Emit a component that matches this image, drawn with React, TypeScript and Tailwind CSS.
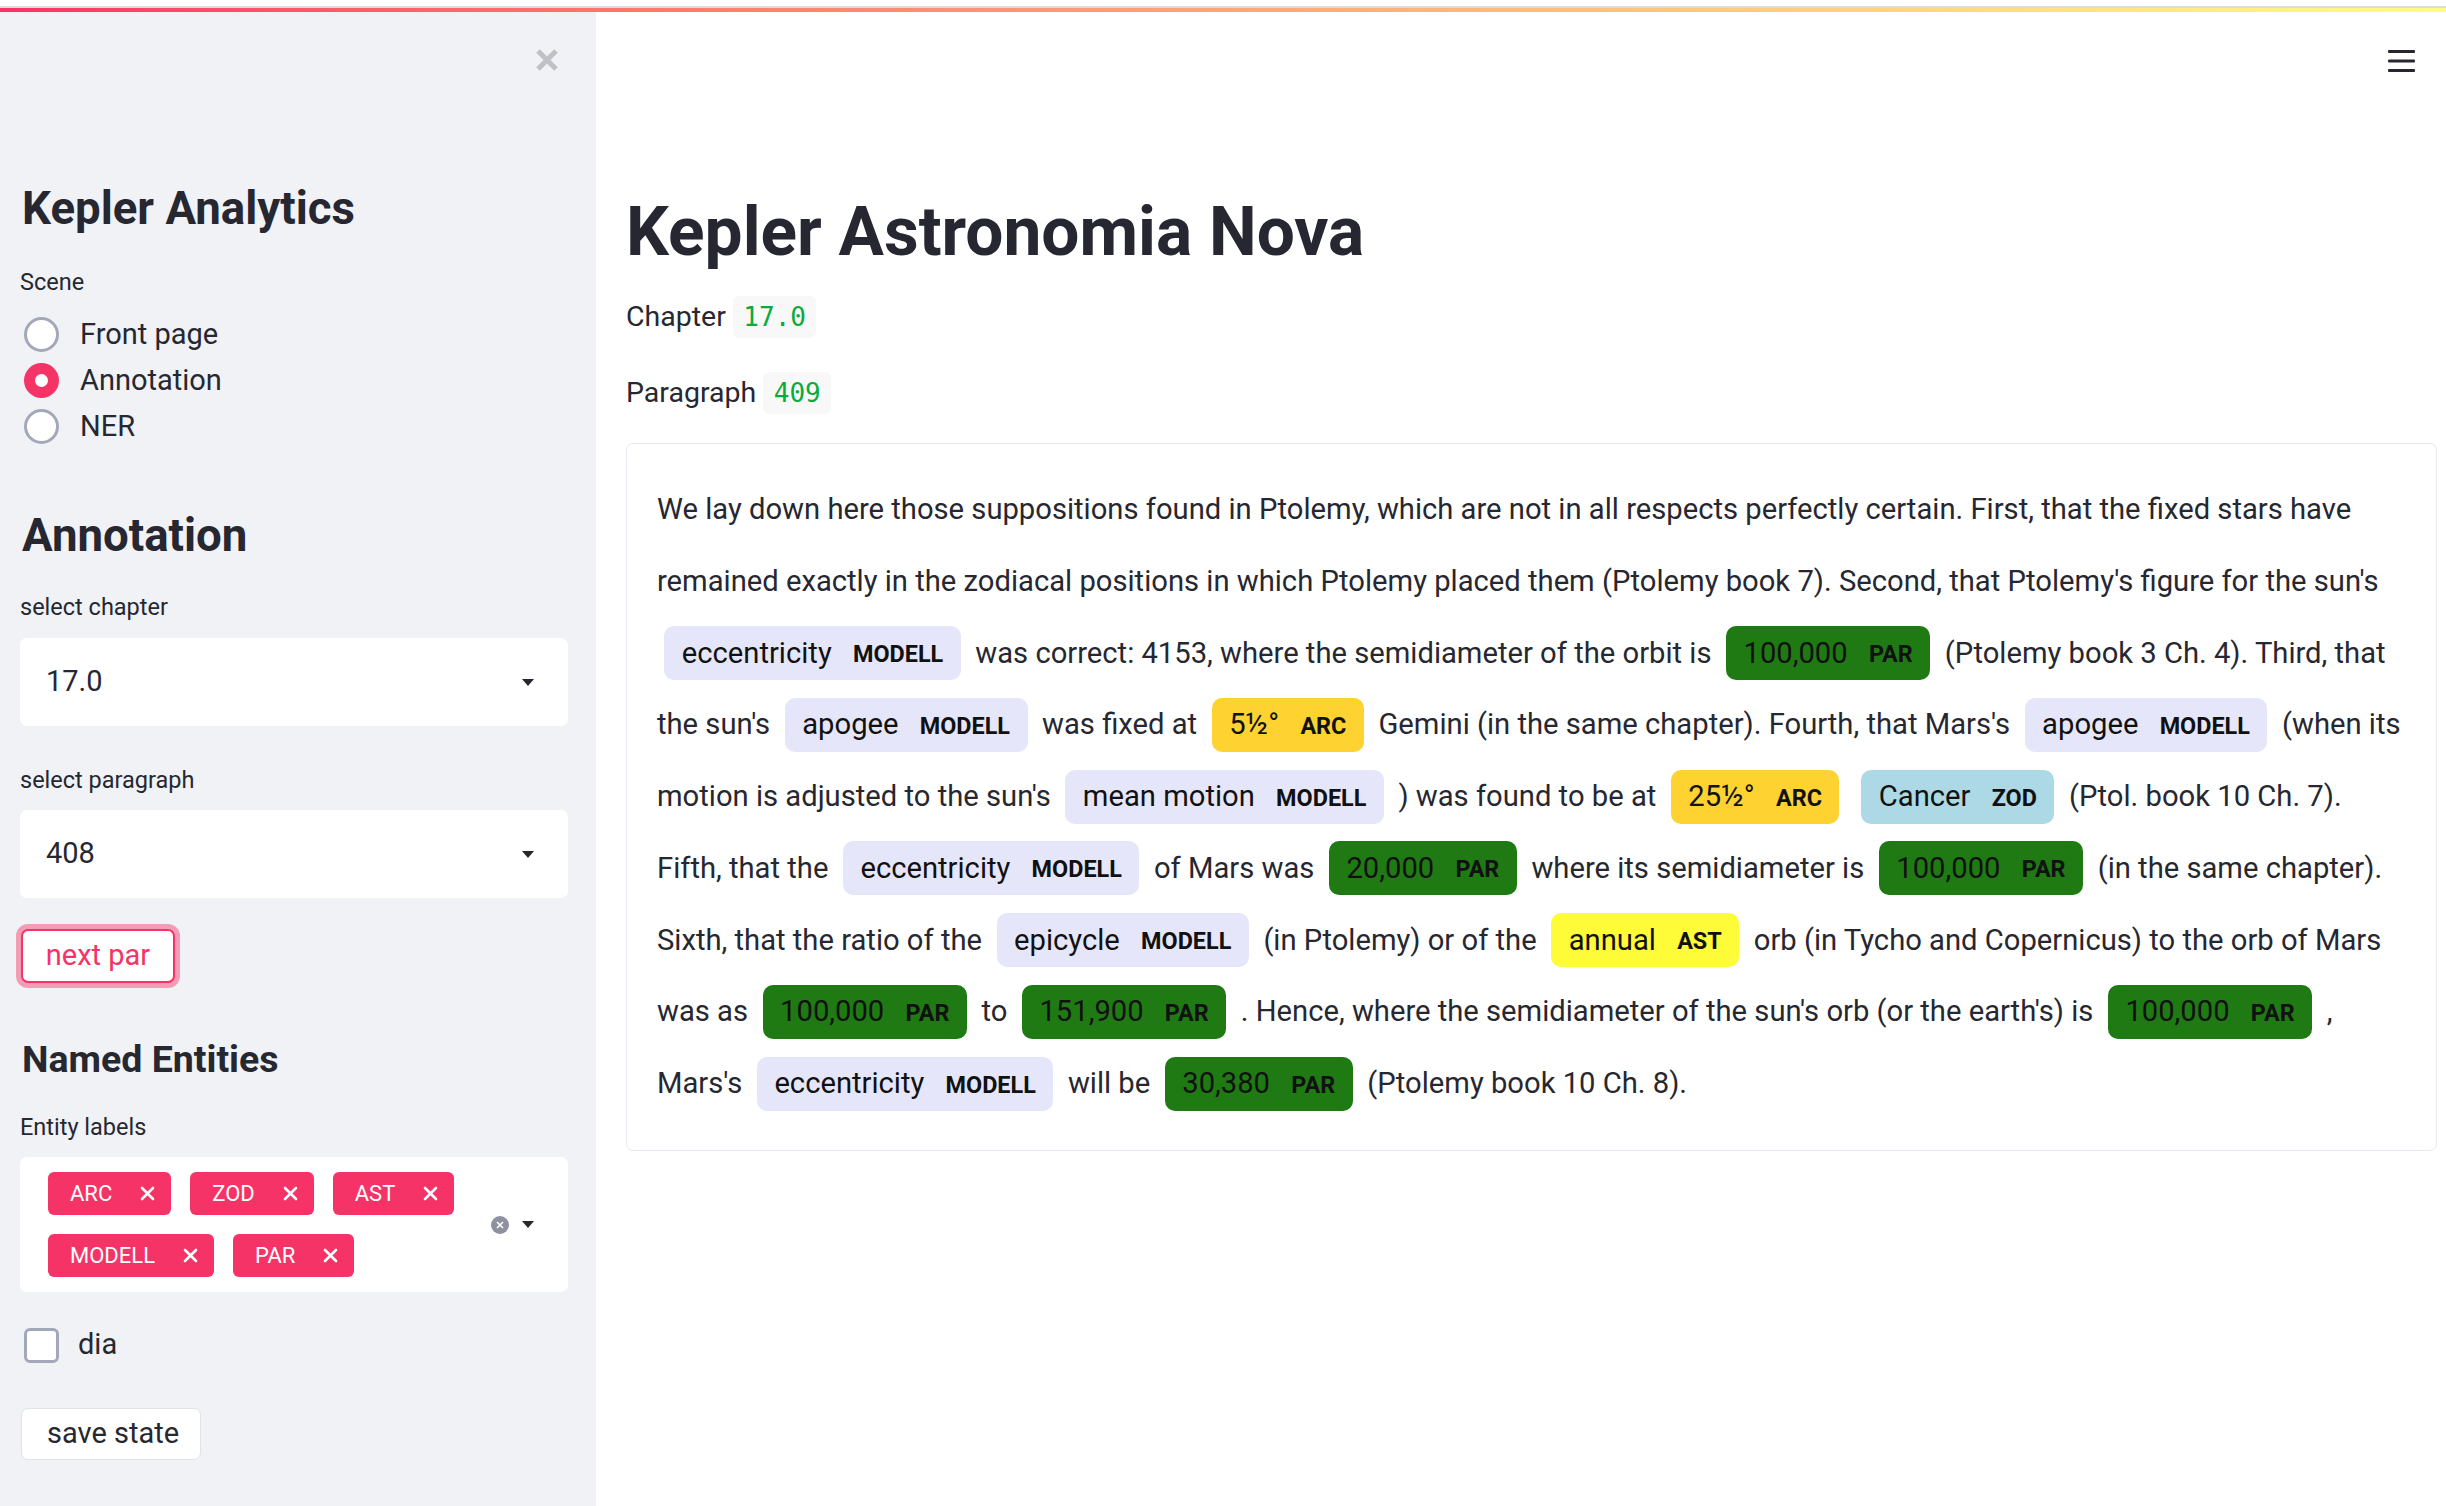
import React from "react";

type Seg = string | [string, string];

const markBg: Record<string, string> = {
  MODELL: "bg-[#e6e6fa]",
  PAR: "bg-[#1f7a14]",
  ARC: "bg-[#fdd231]",
  AST: "bg-[#fefb38]",
  ZOD: "bg-[#add8e6]",
};

const lines: Seg[][] = [
  ["We lay down here those suppositions found in Ptolemy, which are not in all respects perfectly certain. First, that the fixed stars have"],
  ["remained exactly in the zodiacal positions in which Ptolemy placed them (Ptolemy book 7). Second, that Ptolemy's figure for the sun's"],
  [["eccentricity", "MODELL"], "was correct: 4153, where the semidiameter of the orbit is", ["100,000", "PAR"], "(Ptolemy book 3 Ch. 4). Third, that"],
  ["the sun's", ["apogee", "MODELL"], "was fixed at", ["5½°", "ARC"], "Gemini (in the same chapter). Fourth, that Mars's", ["apogee", "MODELL"], "(when its"],
  ["motion is adjusted to the sun's", ["mean motion", "MODELL"], ") was found to be at", ["25½°", "ARC"], ["Cancer", "ZOD"], "(Ptol. book 10 Ch. 7)."],
  ["Fifth, that the", ["eccentricity", "MODELL"], "of Mars was", ["20,000", "PAR"], "where its semidiameter is", ["100,000", "PAR"], "(in the same chapter)."],
  ["Sixth, that the ratio of the", ["epicycle", "MODELL"], "(in Ptolemy) or of the", ["annual", "AST"], "orb (in Tycho and Copernicus) to the orb of Mars"],
  ["was as", ["100,000", "PAR"], "to", ["151,900", "PAR"], ". Hence, where the semidiameter of the sun's orb (or the earth's) is", ["100,000", "PAR"], ","],
  ["Mars's", ["eccentricity", "MODELL"], "will be", ["30,380", "PAR"], "(Ptolemy book 10 Ch. 8)."],
];

function Mark({ text, label }: { text: string; label: string }) {
  return (
    <span className={`inline-block ${markBg[label]} py-[12.5px] px-[17.5px] mx-[7.3px] leading-none rounded-[10px] text-[#111]`}>
      {text} <span className="ml-[14px] text-[23.4px] font-bold uppercase align-middle leading-none">{label}</span>
    </span>
  );
}

function Arrow() {
  return (
    <svg width="12" height="7" viewBox="0 0 12 7">
      <path d="M0 0 L12 0 L6 7 Z" fill="#262730" />
    </svg>
  );
}

function SelectBox({ value }: { value: string }) {
  return (
    <div className="h-[88px] bg-white rounded-[7px] flex items-center justify-between pl-[26px] pr-[34px]">
      <span className="text-[29px]">{value}</span>
      <Arrow />
    </div>
  );
}

function Radio({ label, checked }: { label: string; checked?: boolean }) {
  return (
    <div className="flex items-center h-[46px]">
      {checked ? (
        <span className="ml-[4px] w-[35px] h-[35px] rounded-full bg-[#f63366] flex items-center justify-center">
          <span className="w-[13px] h-[13px] rounded-full bg-white" />
        </span>
      ) : (
        <span className="ml-[4px] w-[35px] h-[35px] rounded-full border-[3px] border-[#a3a8b8] bg-white" />
      )}
      <span className="ml-[21px] text-[29px] leading-none">{label}</span>
    </div>
  );
}

function Tag({ label }: { label: string }) {
  return (
    <span className="h-[43px] bg-[#f63366] rounded-[6px] flex items-center pl-[22px] pr-[16px] text-white">
      <span className="text-[22px]">{label}</span>
      <svg className="ml-[28px]" width="15" height="15" viewBox="0 0 15 15">
        <path d="M2 2 L13 13 M13 2 L2 13" stroke="white" strokeWidth="2.6" strokeLinecap="round" />
      </svg>
    </span>
  );
}

function Code({ children }: { children: string }) {
  return (
    <span className="ml-[7px] inline-flex items-center h-[42px] px-[10.5px] rounded-[6px] bg-[#f8f8f9] text-[#09ab3b] text-[26px] font-[family-name:'DejaVu_Sans_Mono',monospace]">
      {children}
    </span>
  );
}

export default function App() {
  return (
    <div className="w-[2446px] h-[1506px] overflow-hidden bg-white text-[#262730] font-[family-name:Roboto,sans-serif]">
      <div className="h-[6px] bg-white" />
      <div className="h-[2px] bg-[#dcdcdc]" />
      <div className="h-[4px] bg-gradient-to-r from-[#f63366] to-[#fffd80]" />
      <div className="flex h-[1494px]">
        {/* sidebar */}
        <aside className="w-[596px] shrink-0 bg-[#f0f2f6] pl-[20px] pr-[28px] flex flex-col">
          <div className="pt-[36px] flex justify-end pr-[9px]">
            <svg width="24" height="24" viewBox="0 0 24 24">
              <path d="M3 3 L21 21 M21 3 L3 21" stroke="#bfc1c7" strokeWidth="5" />
            </svg>
          </div>
          <h2 className="mt-[111px] text-[45.6px] font-bold leading-[52px] pl-[2px]">Kepler Analytics</h2>
          <div className="mt-[30px] text-[23.5px] leading-[34px]">Scene</div>
          <div className="mt-[12px] flex flex-col">
            <Radio label="Front page" />
            <Radio label="Annotation" checked />
            <Radio label="NER" />
          </div>
          <h2 className="mt-[61px] text-[45.6px] font-bold leading-[52px] pl-[2px]">Annotation</h2>
          <div className="mt-[28px] text-[23.5px] leading-[34px]">select chapter</div>
          <div className="mt-[14px]">
            <SelectBox value="17.0" />
          </div>
          <div className="mt-[37px] text-[23.5px] leading-[34px]">select paragraph</div>
          <div className="mt-[13px]">
            <SelectBox value="408" />
          </div>
          <div className="mt-[31px] pl-[1px]">
            <button className="w-[154px] h-[54px] rounded-[7px] border-2 border-[#f63366] bg-white text-[#f63366] text-[29px] shadow-[0_0_0_5px_rgba(246,51,102,0.45)]">
              next par
            </button>
          </div>
          <h3 className="mt-[55px] text-[37.5px] font-bold leading-[42px] pl-[2px]">Named Entities</h3>
          <div className="mt-[30px] text-[23.5px] leading-[34px]">Entity labels</div>
          <div className="mt-[13px] bg-white rounded-[7px] h-[135px] flex items-center pl-[28px] pr-[34px]">
            <div className="flex-1 flex flex-wrap gap-x-[19px] gap-y-[19px] pr-[20px]">
              <Tag label="ARC" />
              <Tag label="ZOD" />
              <Tag label="AST" />
              <Tag label="MODELL" />
              <Tag label="PAR" />
            </div>
            <svg width="18" height="18" viewBox="0 0 18 18">
              <circle cx="9" cy="9" r="9" fill="#8e92a0" />
              <path d="M6 6 L12 12 M12 6 L6 12" stroke="white" strokeWidth="1.6" />
            </svg>
            <span className="ml-[13px]">
              <Arrow />
            </span>
          </div>
          <div className="mt-[36px] flex items-center h-[34px]">
            <span className="ml-[4px] w-[35px] h-[35px] rounded-[6px] border-[3px] border-[#a3a8b8] bg-white" />
            <span className="ml-[19px] text-[29px]">dia</span>
          </div>
          <div className="mt-[46px] pl-[1px]">
            <button className="w-[180px] h-[52px] rounded-[7px] border border-[#e0e2e8] bg-white text-[29px] text-left pl-[25px]">
              save state
            </button>
          </div>
        </aside>

        {/* main */}
        <main className="flex-1 pl-[30px] pr-[9px] flex flex-col">
          <div className="pt-[38px] flex justify-end pr-[22px]">
            <svg width="27" height="22" viewBox="0 0 27 22">
              <rect x="0" y="0" width="27" height="3" rx="1" fill="#262730" />
              <rect x="0" y="9.5" width="27" height="3" rx="1" fill="#262730" />
              <rect x="0" y="19" width="27" height="3" rx="1" fill="#262730" />
            </svg>
          </div>
          <h1 className="mt-[120px] text-[67.6px] font-bold leading-[80px]">Kepler Astronomia Nova</h1>
          <div className="mt-[24px] flex items-center h-[42px] text-[28.5px]">
            <span>Chapter</span>
            <Code>17.0</Code>
          </div>
          <div className="mt-[34px] flex items-center h-[42px] text-[28.5px]">
            <span>Paragraph</span>
            <Code>409</Code>
          </div>
          <div className="mt-[29px] border border-[#e6e9ef] rounded-[7px] p-[30px] text-[29.2px]">
            {lines.map((line, i) => (
              <div key={i} className="whitespace-nowrap leading-[71.75px] h-[71.75px]">
                {line.map((seg, j) => (
                  <React.Fragment key={j}>
                    {j > 0 ? " " : ""}
                    {typeof seg === "string" ? seg : <Mark text={seg[0]} label={seg[1]} />}
                  </React.Fragment>
                ))}
              </div>
            ))}
          </div>
        </main>
      </div>
    </div>
  );
}
